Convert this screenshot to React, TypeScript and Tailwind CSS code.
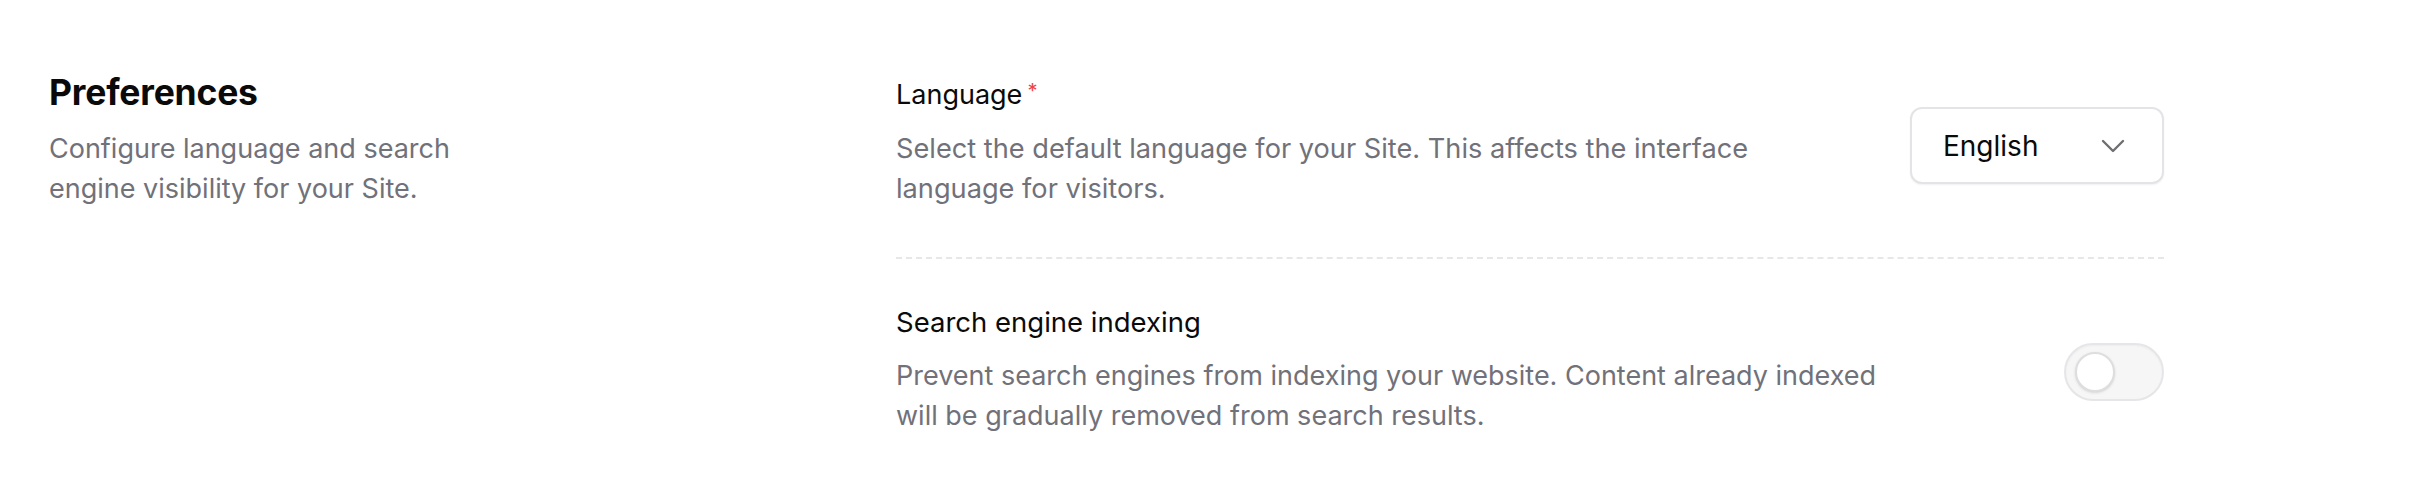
import { useState } from "react";

function Chevron() {
  return (
    <svg width="24" height="14" viewBox="0 0 24 14" fill="none" className="text-[#6f6f73]">
      <path d="M2 2l10 10L22 2" stroke="currentColor" strokeWidth="2.4" strokeLinecap="round" strokeLinejoin="round" />
    </svg>
  );
}

function Toggle({ on, onChange }: { on: boolean; onChange: (v: boolean) => void }) {
  return (
    <button
      type="button"
      onClick={() => onChange(!on)}
      className="mt-[4px] flex h-[58px] w-[100px] shrink-0 items-center rounded-full border-2 border-[#e6e6e8] bg-[#f6f6f7] px-[9px] shadow-[inset_0_1px_2px_rgba(0,0,0,0.04)]"
    >
      <span
        className={
          on
            ? "ml-auto h-[40px] w-[40px] rounded-full border-2 border-[#dedee0] bg-white shadow-sm"
            : "h-[40px] w-[40px] rounded-full border-2 border-[#dedee0] bg-white shadow-sm"
        }
      />
    </button>
  );
}

export default function App() {
  const [indexing, setIndexing] = useState(false);

  return (
    <div className="h-[490px] w-full bg-white font-['Inter',sans-serif] antialiased">
      <div className="flex px-[49px] pt-[73px]">
        <div className="w-[847px] shrink-0">
          <h2 className="text-[35.5px] font-bold leading-[40px] tracking-[-0.2px] text-[#0a0a0a]">
            Preferences
          </h2>
          <p className="mt-4 w-[460px] text-[27px] leading-[40px] text-[#71717a]">
            Configure language and search engine visibility for your Site.
          </p>
        </div>

        <div className="mt-1 w-[1268px]">
          <div className="flex items-center justify-between gap-16 border-b-2 border-dashed border-[#e7e7e9] pb-[48px]">
            <div className="max-w-[1000px] flex-1">
              <label className="flex text-[27px] leading-[36px] text-[#0a0a0a]">
                Language
                <span className="ml-[5px] -mt-[4px] text-[20px] text-[#ef4444]">*</span>
              </label>
              <p className="mt-4 text-[27.2px] leading-[40px] text-[#71717a]">
                Select the default language for your Site. This affects the interface language for visitors.
              </p>
            </div>
            <button
              type="button"
              className="mt-[5px] flex h-[77px] w-[254px] shrink-0 items-center justify-between rounded-[12px] border-2 border-[#e4e4e6] bg-white pl-[31px] pr-[37px] shadow-[0_1px_2px_rgba(0,0,0,0.06)]"
            >
              <span className="text-[28px] text-[#0a0a0a]">English</span>
              <Chevron />
            </button>
          </div>

          <div className="flex items-center justify-between gap-16 pt-[45px]">
            <div className="max-w-[1000px] flex-1">
              <div className="text-[27.5px] leading-[36px] text-[#0a0a0a]">Search engine indexing</div>
              <p className="mt-4 text-[27px] leading-[40px] text-[#71717a]">
                Prevent search engines from indexing your website. Content already indexed will be gradually removed from search results.
              </p>
            </div>
            <Toggle on={indexing} onChange={setIndexing} />
          </div>
        </div>
      </div>
    </div>
  );
}
